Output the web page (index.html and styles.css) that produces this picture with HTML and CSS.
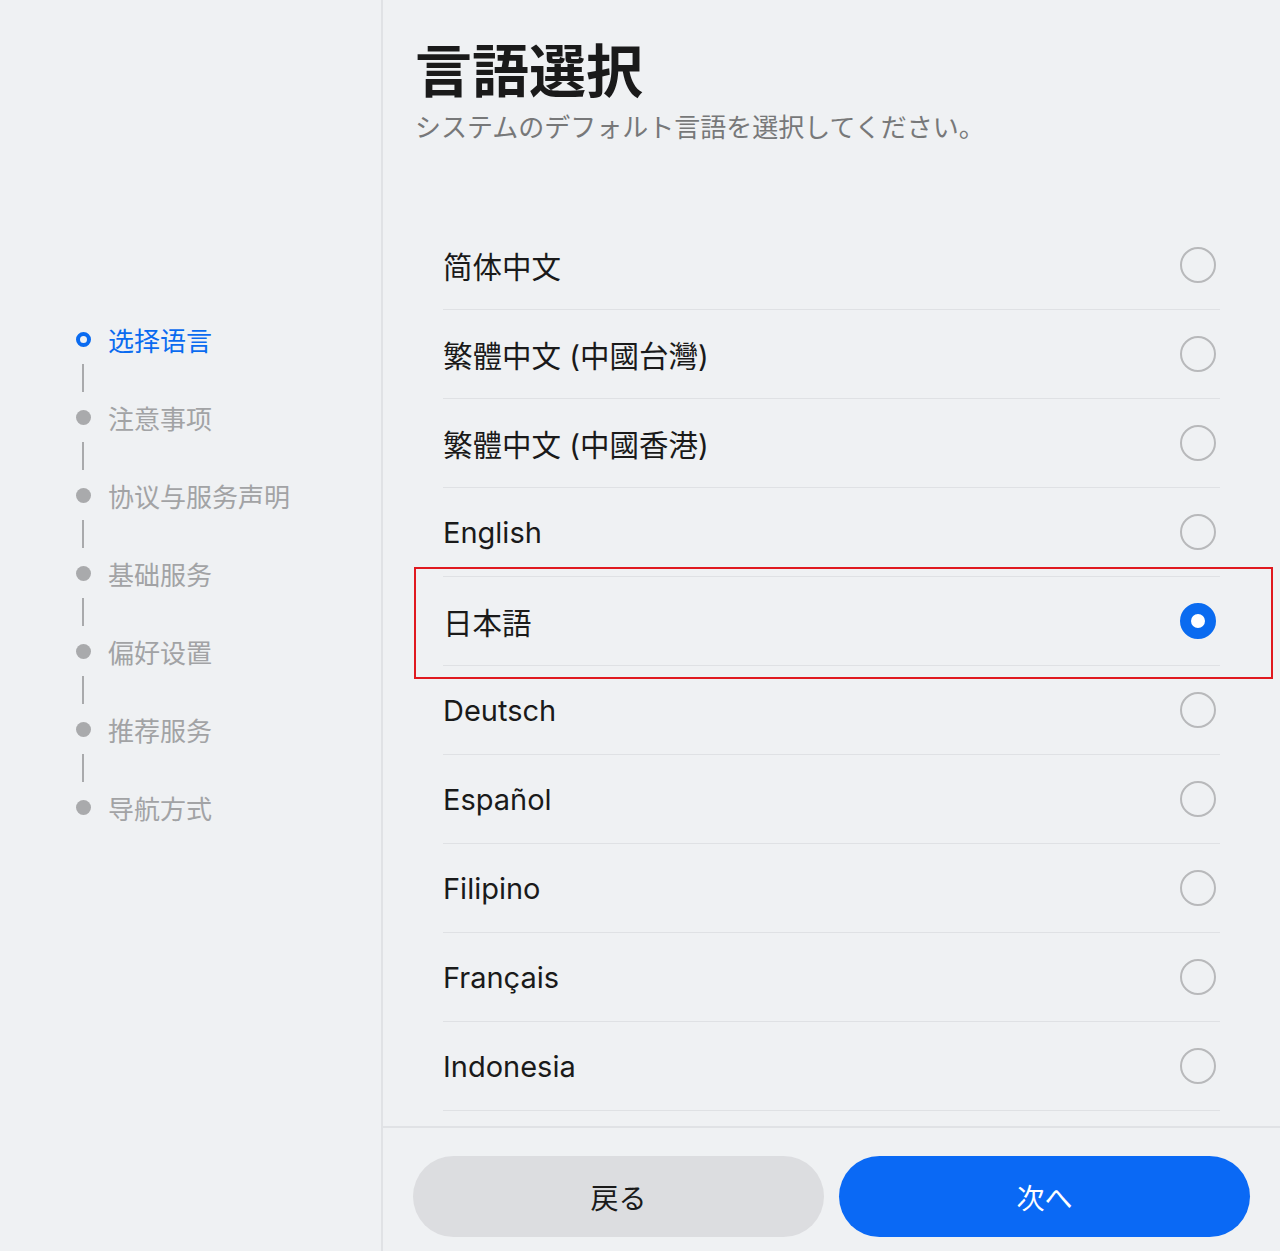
FILE: index.html
```html
<!DOCTYPE html>
<html lang="ja">
<head>
<meta charset="utf-8">
<title>言語選択</title>
<link rel="stylesheet" href="styles.css">
</head>
<body>
<div class="app">
  <aside class="sidebar">
    <ol class="steps">
      <li class="step active"><span class="dot"></span><span class="label">选择语言</span></li>
      <li class="connector"></li>
      <li class="step"><span class="dot"></span><span class="label">注意事项</span></li>
      <li class="connector"></li>
      <li class="step"><span class="dot"></span><span class="label">协议与服务声明</span></li>
      <li class="connector"></li>
      <li class="step"><span class="dot"></span><span class="label">基础服务</span></li>
      <li class="connector"></li>
      <li class="step"><span class="dot"></span><span class="label">偏好设置</span></li>
      <li class="connector"></li>
      <li class="step"><span class="dot"></span><span class="label">推荐服务</span></li>
      <li class="connector"></li>
      <li class="step"><span class="dot"></span><span class="label">导航方式</span></li>
    </ol>
  </aside>
  <main class="main">
    <div class="content">
      <h1 class="title">言語選択</h1>
      <p class="subtitle">システムのデフォルト言語を選択してください。</p>
      <ul class="langs">
        <li class="lang"><span class="name cjk">简体中文</span><span class="radio"></span></li>
        <li class="lang"><span class="name cjk">繁體中文 (中國台灣)</span><span class="radio"></span></li>
        <li class="lang"><span class="name cjk">繁體中文 (中國香港)</span><span class="radio"></span></li>
        <li class="lang"><span class="name">English</span><span class="radio"></span></li>
        <li class="lang selected"><span class="name cjk">日本語</span><span class="radio"></span></li>
        <li class="lang"><span class="name">Deutsch</span><span class="radio"></span></li>
        <li class="lang"><span class="name">Español</span><span class="radio"></span></li>
        <li class="lang"><span class="name">Filipino</span><span class="radio"></span></li>
        <li class="lang"><span class="name">Français</span><span class="radio"></span></li>
        <li class="lang"><span class="name">Indonesia</span><span class="radio"></span></li>
      </ul>
      <div class="highlight"></div>
    </div>
    <footer class="footer">
      <button class="btn back">戻る</button>
      <button class="btn next">次へ</button>
    </footer>
  </main>
</div>
</body>
</html>
```

FILE: styles.css
```css
* { box-sizing: border-box; }
html, body {
  margin: 0;
  padding: 0;
  height: 100%;
}
body {
  background: #eff1f3;
  font-family: "Inter", "Noto Sans CJK JP", "Noto Sans CJK SC", sans-serif;
  color: #1a1a1a;
}
.app {
  display: flex;
  width: 1280px;
  height: 1251px;
  overflow: hidden;
}
.sidebar {
  width: 383px;
  flex: none;
  border-right: 2px solid #e0e2e5;
  padding-top: 322px;
  padding-left: 75px;
}
.steps {
  list-style: none;
  margin: 0;
  padding: 0;
}
.step {
  display: flex;
  align-items: center;
  height: 34px;
  font-family: "Noto Sans CJK SC", sans-serif;
  font-size: 26px;
  color: #a2a3a5;
}
.step .dot {
  width: 15px;
  height: 15px;
  border-radius: 50%;
  background: #a9aaac;
  margin-left: 1px;
  margin-right: 17px;
}
.step.active {
  color: #0a6bf0;
}
.step.active .dot {
  background: transparent;
  border: 4px solid #0a6bf0;
}
.connector {
  width: 2px;
  height: 28px;
  margin: 8px 0 8px 7px;
  background: #a9aaac;
}
.main {
  position: relative;
  flex: 1;
  display: flex;
  flex-direction: column;
  min-width: 0;
}
.content {
  flex: 1;
  overflow: hidden;
  padding-left: 32px;
  padding-top: 27px;
}
.title {
  margin: 0;
  font-family: "Noto Sans CJK JP", sans-serif;
  font-weight: 700;
  font-size: 57px;
  line-height: 80px;
  color: #1a1a1a;
}
.subtitle {
  margin: 1px 0 0 0;
  font-family: "Noto Sans CJK JP", sans-serif;
  font-size: 26px;
  line-height: 36px;
  color: #777879;
}
.langs {
  list-style: none;
  margin: 77px 0 0 28px;
  padding: 0;
  width: 777px;
}
.lang {
  display: flex;
  align-items: center;
  justify-content: space-between;
  height: 89px;
  border-bottom: 1.5px solid #dfe1e4;
  font-size: 29px;
  color: #1a1a1a;
  padding-right: 4px;
}
.lang .cjk {
  font-size: 29.5px;
}
.radio {
  width: 36px;
  height: 36px;
  border-radius: 50%;
  border: 2.5px solid #b8b9bb;
}
.lang.selected .radio {
  border: 11px solid #0a6bf0;
  background: #fff;
}
.highlight {
  position: absolute;
  left: 31px;
  top: 567px;
  width: 859px;
  height: 112px;
  border: 2px solid #e0191f;
  pointer-events: none;
}
.footer {
  flex: none;
  height: 125px;
  border-top: 2px solid #e0e2e5;
  display: flex;
  gap: 15px;
  padding: 28px 30px 14px 30px;
}
.btn {
  flex: 1;
  height: 81px;
  border: none;
  border-radius: 41px;
  font-family: "Noto Sans CJK JP", sans-serif;
  font-size: 28px;
  cursor: pointer;
}
.btn.back {
  background: #dcdde0;
  color: #1a1a1a;
}
.btn.next {
  background: #0a69f5;
  color: #ffffff;
}
```
